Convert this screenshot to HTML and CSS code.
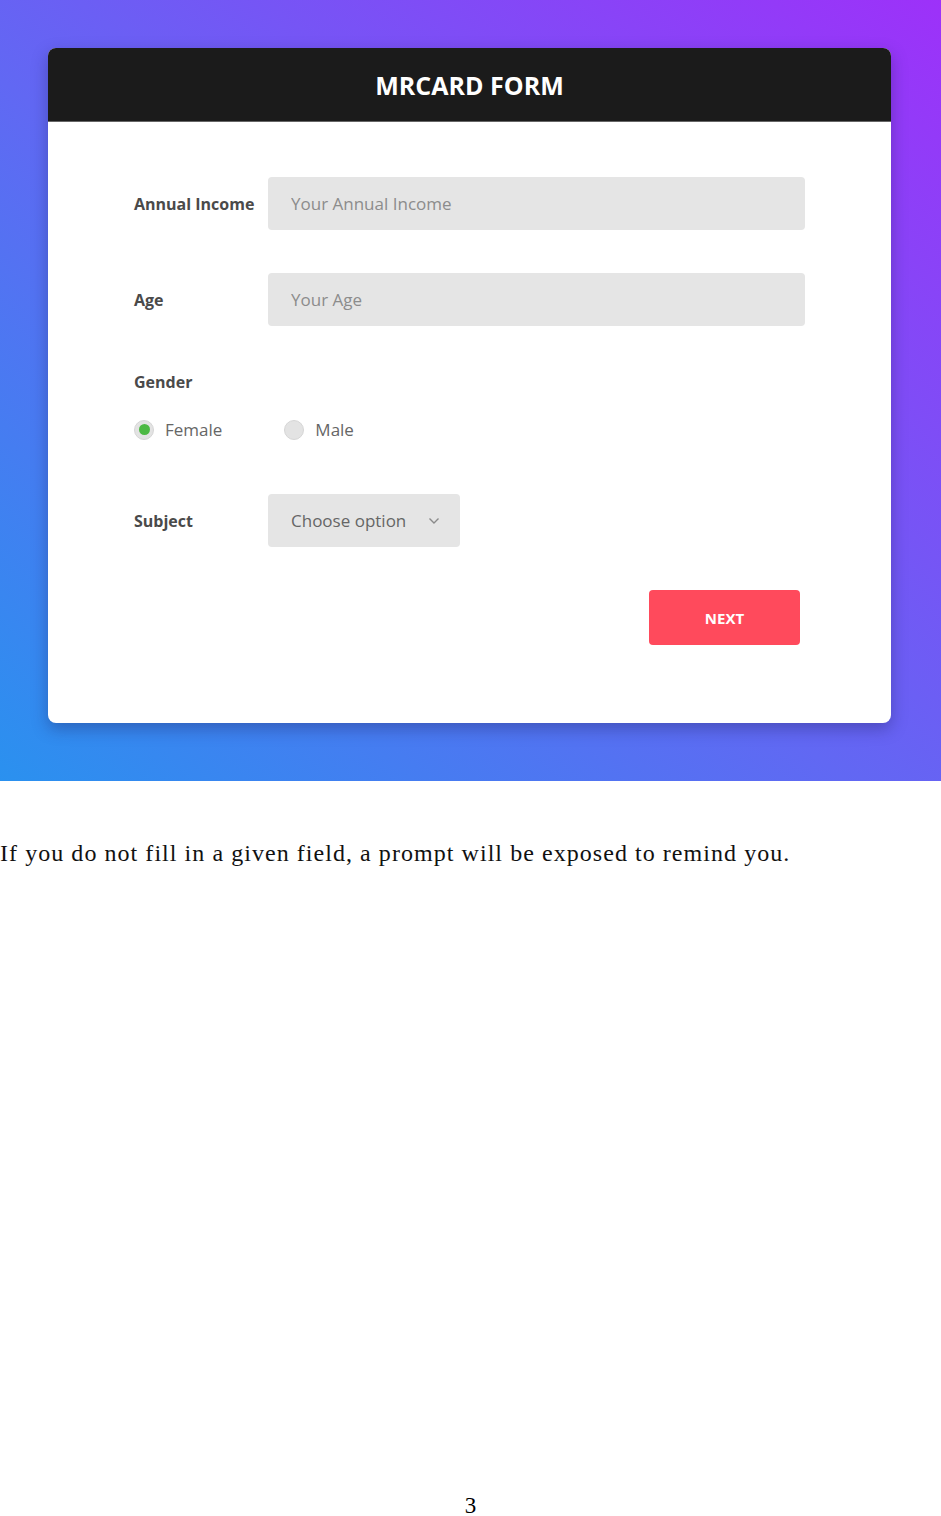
FILE: index.html
```html
<!DOCTYPE html>
<html lang="en">
<head>
    <meta charset="UTF-8">
    <meta name="viewport" content="width=device-width, initial-scale=1.0">
    <title>MRCARD Form</title>
    <link rel="stylesheet" href="styles.css">
</head>
<body>

    <div class="shot">
        <div class="card">
            <div class="card-header">
                <h2>MRCARD FORM</h2>
            </div>
            <form class="card-body" id="mrcardForm">
                <div class="row">
                    <label for="income">Annual Income</label>
                    <input type="text" id="income" class="field" placeholder="Your Annual Income">
                </div>

                <div class="row">
                    <label for="age">Age</label>
                    <input type="text" id="age" class="field" placeholder="Your Age">
                </div>

                <div class="gender">
                    <span class="label">Gender</span>
                    <div class="radios">
                        <label class="radio"><span class="dot checked"></span>Female</label>
                        <label class="radio"><span class="dot"></span>Male</label>
                    </div>
                </div>

                <div class="row">
                    <label for="subject">Subject</label>
                    <div class="select" id="subject">
                        Choose option
                        <svg width="12" height="8" viewBox="0 0 12 8"><path d="M1.5 1.5 L6 6 L10.5 1.5" fill="none" stroke="#8a8a8a" stroke-width="1.4"/></svg>
                    </div>
                </div>

                <div class="actions">
                    <button type="button" class="btn-next">NEXT</button>
                </div>
            </form>
        </div>
    </div>

    <p class="note">If you do not fill in a given field, a prompt will be exposed to remind you.</p>

    <div class="page-num">3</div>

</body>
</html>
```

FILE: styles.css
```css
/* Page */
body {
    margin: 0;
    font-family: 'Liberation Serif', serif;
    background: #fff;
}

/* Screenshot area */
.shot {
    height: 781px;
    padding: 48px 50px 0 48px;
    box-sizing: border-box;
    background: linear-gradient(to top right, #2a91ef 0%, #6168f3 45%, #9d31f9 100%);
}

.card {
    background-color: #fff;
    border-radius: 8px;
    overflow: hidden;
    height: 675px;
    box-shadow: 0 6px 16px rgba(30, 30, 90, 0.35);
    font-family: 'Open Sans', sans-serif;
}

.card-header {
    background-color: #1b1b1b;
    height: 74px;
    display: flex;
    align-items: center;
    justify-content: center;
    border-bottom: 1px solid #666;
    box-sizing: border-box;
}

.card-header h2 {
    margin: 0;
    color: #fff;
    font-size: 25px;
    font-weight: 700;
}

/* Form */
.card-body {
    display: flex;
    flex-direction: column;
    padding: 55px 86px 0 86px;
}

.row {
    display: flex;
    align-items: center;
    margin-bottom: 43px;
}

.row label,
.label {
    width: 134px;
    flex-shrink: 0;
    font-size: 16px;
    font-weight: 700;
    color: #4a4a4a;
}

.field {
    flex: 1;
    height: 53px;
    box-sizing: border-box;
    border: none;
    border-radius: 4px;
    background-color: #e5e5e5;
    padding: 0 23px;
    font-family: 'Open Sans', sans-serif;
    font-size: 17px;
    color: #555;
    outline: none;
}

.field::placeholder {
    color: #8c8c8c;
}

/* Gender */
.gender {
    display: flex;
    flex-direction: column;
    margin-top: 2px;
    margin-bottom: 53px;
}

.radios {
    display: flex;
    gap: 62px;
    margin-top: 25px;
}

.radio {
    display: flex;
    align-items: center;
    gap: 11px;
    font-size: 17px;
    color: #666;
}

.dot {
    width: 20px;
    height: 20px;
    box-sizing: border-box;
    border-radius: 50%;
    background-color: #e3e3e3;
    border: 1px solid #d6d6d6;
    display: flex;
    align-items: center;
    justify-content: center;
}

.dot.checked::after {
    content: "";
    width: 11px;
    height: 11px;
    border-radius: 50%;
    background-color: #4cb944;
}

/* Select */
.select {
    width: 192px;
    height: 53px;
    box-sizing: border-box;
    border-radius: 4px;
    background-color: #e5e5e5;
    padding: 0 20px 0 23px;
    display: flex;
    align-items: center;
    justify-content: space-between;
    font-size: 17px;
    color: #666;
}

/* Button */
.actions {
    display: flex;
    justify-content: flex-end;
    padding-right: 5px;
}

.btn-next {
    width: 151px;
    height: 55px;
    border: none;
    border-radius: 4px;
    background-color: #ff4a5c;
    color: #fff;
    font-family: 'Open Sans', sans-serif;
    font-size: 15px;
    font-weight: 700;
    cursor: pointer;
}

/* Document text */
.note {
    margin: 59px 0 0 0;
    font-size: 24px;
    letter-spacing: 1.05px;
    color: #111;
}

.page-num {
    margin-top: 626px;
    text-align: center;
    font-size: 23px;
}
```
